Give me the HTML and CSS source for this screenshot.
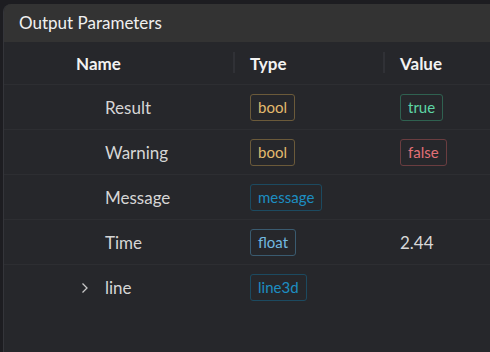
FILE: index.html
```html
<!DOCTYPE html>
<html lang="en">
<head>
    <meta charset="UTF-8">
    <title>Output Parameters</title>
    <link rel="stylesheet" href="styles.css">
</head>
<body>
    <div class="panel">
        <div class="panel-header">Output Parameters</div>
        <div class="table">
            <div class="row head">
                <div class="cell name">Name</div>
                <div class="cell type"><span class="sep"></span>Type</div>
                <div class="cell value"><span class="sep"></span>Value</div>
            </div>
            <div class="row">
                <div class="cell name"><span class="label">Result</span></div>
                <div class="cell type"><span class="tag tag-bool">bool</span></div>
                <div class="cell value"><span class="tag tag-true">true</span></div>
            </div>
            <div class="row">
                <div class="cell name"><span class="label">Warning</span></div>
                <div class="cell type"><span class="tag tag-bool">bool</span></div>
                <div class="cell value"><span class="tag tag-false">false</span></div>
            </div>
            <div class="row">
                <div class="cell name"><span class="label">Message</span></div>
                <div class="cell type"><span class="tag tag-obj">message</span></div>
                <div class="cell value"></div>
            </div>
            <div class="row">
                <div class="cell name"><span class="label">Time</span></div>
                <div class="cell type"><span class="tag tag-float">float</span></div>
                <div class="cell value"><span class="num">2.44</span></div>
            </div>
            <div class="row last">
                <div class="cell name">
                    <svg class="chevron" width="8" height="12" viewBox="0 0 8 12"><path d="M1.5 1.5 L6 6 L1.5 10.5" fill="none" stroke="#c8c8c8" stroke-width="1.3"/></svg>
                    <span class="label">line</span>
                </div>
                <div class="cell type"><span class="tag tag-obj">line3d</span></div>
                <div class="cell value"></div>
            </div>
        </div>
    </div>
</body>
</html>
```

FILE: styles.css
```css
* {
    margin: 0;
    padding: 0;
    box-sizing: border-box;
}

body {
    background: #1d1d21;
    font-family: 'Segoe UI', Lato, 'Noto Sans', sans-serif;
    color: #d4d4d4;
    height: 352px;
    overflow: hidden;
    padding: 4px 0 0 3px;
}

.panel {
    width: 487px;
    height: 348px;
    background: #26272b;
    border-left: 1px solid #34353a;
    border-radius: 8px 0 0 0;
    overflow: hidden;
}

.panel-header {
    height: 38px;
    background: #333333;
    color: #f0f0f0;
    font-size: 17px;
    padding: 8px 0 0 15px;
}

.row {
    display: flex;
    height: 45px;
    align-items: center;
    border-bottom: 1px solid #2d2e32;
}

.row.head {
    height: 43px;
    font-weight: bold;
    font-size: 17px;
    color: #f2f2f2;
}

.row.last {
    border-bottom: none;
}

.cell {
    display: flex;
    align-items: center;
    height: 100%;
}

.cell.name {
    width: 229px;
    padding-left: 72px;
}

.cell.type {
    width: 150px;
    padding-left: 17px;
    position: relative;
}

.cell.value {
    flex: 1;
    padding-left: 17px;
    position: relative;
}

.sep {
    position: absolute;
    left: 0;
    top: 10px;
    width: 2px;
    height: 21px;
    background: #303136;
}

.label {
    font-size: 17px;
    color: #d6d6d6;
    margin-left: 29px;
}

.chevron {
    margin-left: 5px;
    margin-right: -13px;
}

.tag {
    display: inline-block;
    font-size: 15px;
    line-height: 25px;
    padding: 0 7px;
    border: 1px solid;
    border-radius: 3px;
}

.tag-bool {
    color: #e3bb6e;
    border-color: #6b5a3a;
}

.tag-true {
    color: #5ed6a6;
    border-color: #2f6150;
}

.tag-false {
    color: #e27077;
    border-color: #6a3d40;
}

.tag-obj {
    color: #1d8ec2;
    border-color: #1c4a60;
}

.tag-float {
    color: #72b8e0;
    border-color: #3a5b70;
}

.num {
    font-size: 17px;
    color: #d8d8d8;
}
```
